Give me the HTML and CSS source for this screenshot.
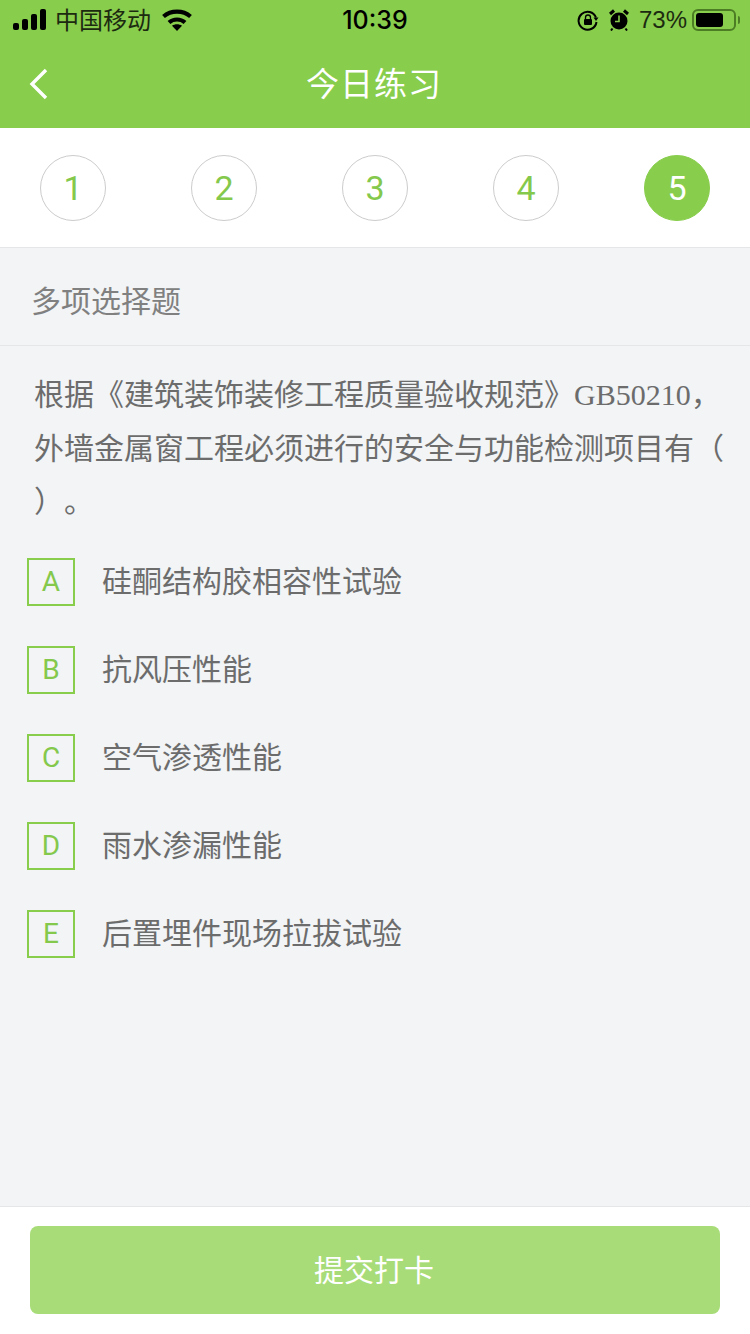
FILE: index.html
```html
<!DOCTYPE html>
<html lang="zh-CN">
<head>
  <meta charset="UTF-8">
  <meta name="viewport" content="width=device-width, initial-scale=1.0">
  <title>今日练习</title>
  <link rel="stylesheet" href="styles.css">
</head>
<body>
  <div class="page">
    <header class="top">
      <div class="status">
        <div class="status-left">
          <svg class="signal" width="34" height="22" viewBox="0 0 34 22" fill="#000">
            <rect x="0" y="14" width="6" height="7" rx="2"></rect>
            <rect x="9" y="10" width="6" height="11" rx="2"></rect>
            <rect x="18" y="5" width="6" height="16" rx="2"></rect>
            <rect x="27" y="0" width="6" height="21" rx="2"></rect>
          </svg>
          <span class="carrier">中国移动</span>
          <svg class="wifi" width="30" height="22" viewBox="0 0 30 22" fill="none" stroke="#000" stroke-width="4.200">
            <path d="M1.500 7.500C9 1 21 1 28.500 7.500"></path>
            <path d="M7 13.500C11.500 9.500 18.500 9.500 23 13.500"></path>
            <path d="M15 22l-5-5.200c2.800-2 7.200-2 10 0z" fill="#000" stroke="none"></path>
          </svg>
        </div>
        <span class="clock">10:39</span>
        <div class="status-right">
          <svg width="22" height="22" viewBox="0 0 22 22" fill="none">
            <path d="M19 8.500A9 9 0 1 0 19.500 13" stroke="#000" stroke-width="2"></path>
            <path d="M16.500 8.500h5l-2.500 3.500z" fill="#000"></path>
            <rect x="7" y="10" width="8" height="6" rx="1" fill="#000"></rect>
            <path d="M8.500 10V8.500a2.500 2.500 0 0 1 5 0V10" stroke="#000" stroke-width="1.300"></path>
          </svg>
          <svg class="alarm" width="20" height="22" viewBox="0 0 20 22" fill="none">
            <circle cx="10" cy="12" r="8.500" fill="#000"></circle>
            <path d="M1 5l4-3.500M19 5l-4-3.500" stroke="#000" stroke-width="3"></path>
            <path d="M3.500 19.500l-1.500 2M16.500 19.500l1.500 2" stroke="#000" stroke-width="2"></path>
            <path d="M10 6.500V12.500H6" stroke="#88cd4c" stroke-width="1.600"></path>
          </svg>
          <span class="percent">73%</span>
          <div class="battery">
            <div class="battery-fill"></div>
          </div>
          <div class="battery-cap"></div>
        </div>
      </div>
      <div class="nav">
        <svg class="back" width="20" height="32" viewBox="0 0 20 32" fill="none" stroke="#fff" stroke-width="3.400">
          <path d="M17 2L3 16l14 14"></path>
        </svg>
        <h1>今日练习</h1>
      </div>
    </header>

    <div class="steps">
      <div class="step">1</div>
      <div class="step">2</div>
      <div class="step">3</div>
      <div class="step">4</div>
      <div class="step step-on">5</div>
    </div>

    <div class="type">多项选择题</div>

    <main class="body">
      <p class="question">根据《建筑装饰装修工程质量验收规范》<span class="latin">GB50210，</span>外墙金属窗工程必须进行的安全与功能检测项目有（ ）。</p>
      <ul class="options">
        <li class="option"><span class="letter">A</span>硅酮结构胶相容性试验</li>
        <li class="option"><span class="letter">B</span>抗风压性能</li>
        <li class="option"><span class="letter">C</span>空气渗透性能</li>
        <li class="option"><span class="letter">D</span>雨水渗漏性能</li>
        <li class="option"><span class="letter">E</span>后置埋件现场拉拔试验</li>
      </ul>
    </main>

    <footer class="bottom">
      <button class="submit">提交打卡</button>
    </footer>
  </div>
</body>
</html>
```

FILE: styles.css
```css
:root {
  --green: #88cd4c;
  --line: #e4e6e8;
  --bg: #f2f4f6;
  --text: #6c6c6c;
}

* {
  box-sizing: border-box;
}

body {
  margin: 0;
  font-family: 'Noto Sans CJK SC', sans-serif;
  background-color: var(--bg);
  color: var(--text);
}

.page {
  display: flex;
  flex-direction: column;
  height: 1334px;
  overflow: hidden;
}

.top {
  height: 128px;
  background-color: var(--green);
  flex-shrink: 0;
}

.status {
  display: grid;
  grid-template-columns: 1fr auto 1fr;
  align-items: center;
  height: 40px;
  padding: 0 10px 0 13px;
  color: #000;
}

.status-left,
.status-right {
  display: flex;
  align-items: center;
}

.status-right {
  justify-content: flex-end;
}

.carrier {
  font-size: 24px;
  line-height: 30px;
  margin-left: 8px;
  padding-bottom: 2px;
  color: #1c2a10;
}

.wifi {
  margin-left: 11px;
}

.clock {
  margin-right: 3px;
  font-size: 25px;
  font-weight: 500;
  font-family: Inter, 'Liberation Sans', sans-serif;
}

.alarm {
  margin-left: 10px;
}

.percent {
  font-size: 24px;
  margin-left: 10px;
  margin-right: 5px;
  font-family: 'Liberation Sans', sans-serif;
  color: #1c2a10;
}

.battery {
  width: 44px;
  height: 22px;
  border: 2px solid #4c7d24;
  border-radius: 6px;
  padding: 2px;
}

.battery-fill {
  width: 27px;
  height: 14px;
  background-color: #000;
  border-radius: 3px;
}

.battery-cap {
  width: 2px;
  height: 8px;
  margin-left: 2px;
  background-color: #4c7d24;
  border-radius: 0 2px 2px 0;
}

.nav {
  display: flex;
  align-items: center;
  justify-content: center;
  height: 88px;
  padding: 0 2px 4px 0;
  position: relative;
}

.back {
  position: absolute;
  left: 29px;
  top: 28px;
}

h1 {
  margin: 0;
  font-size: 33px;
  font-weight: 400;
  color: #fff;
  letter-spacing: 1px;
}

.steps {
  display: flex;
  justify-content: space-between;
  align-items: center;
  height: 120px;
  padding: 0 40px;
  background-color: #fff;
  border-bottom: 1px solid var(--line);
  flex-shrink: 0;
}

.step {
  display: flex;
  align-items: center;
  justify-content: center;
  width: 66px;
  height: 66px;
  border: 1px solid #ccc;
  border-radius: 50%;
  font-family: Roboto, sans-serif;
  font-size: 34px;
  color: #84c84c;
}

.step-on {
  background-color: var(--green);
  border-color: var(--green);
  color: #fff;
}

.type {
  display: flex;
  align-items: center;
  height: 98px;
  padding: 4px 0 0 31px;
  font-size: 30px;
  color: #808080;
  border-bottom: 1px solid var(--line);
  flex-shrink: 0;
}

.body {
  flex: 1;
  padding: 20px 26px 0 30px;
}

.question {
  margin: 0 0 0 4px;
  font-size: 30px;
  line-height: 53.5px;
  color: var(--text);
  text-spacing-trim: space-all;
}

.latin {
  font-family: 'Liberation Serif', 'Noto Sans CJK SC', serif;
  line-height: 1;
}

.options {
  list-style: none;
  margin: 31.5px 0 0 -3px;
  padding: 0;
}

.option {
  display: flex;
  align-items: flex-start;
  height: 48px;
  margin-bottom: 40px;
  font-size: 30px;
  line-height: 42px;
  color: var(--text);
}

.letter {
  display: flex;
  align-items: center;
  justify-content: center;
  width: 48px;
  height: 48px;
  margin-right: 27px;
  border: 2px solid var(--green);
  font-family: Roboto, sans-serif;
  font-size: 28px;
  color: #84c84c;
}

.bottom {
  height: 128px;
  padding: 19px 30px 0;
  background-color: #fff;
  border-top: 1px solid var(--line);
  flex-shrink: 0;
}

.submit {
  display: block;
  width: 690px;
  height: 88px;
  padding: 0 2px 4px 0;
  border: none;
  border-radius: 8px;
  background-color: #a8dc78;
  color: #fff;
  font-size: 30px;
  font-family: inherit;
}
```
